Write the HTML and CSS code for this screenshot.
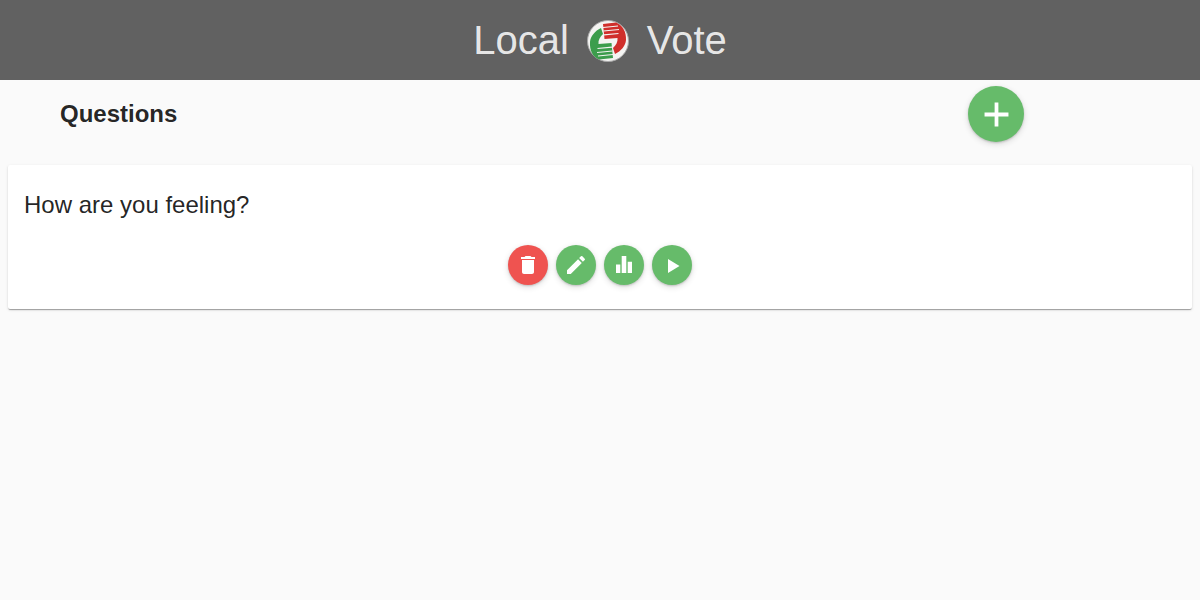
FILE: index.html
```html
<!DOCTYPE html>
<html lang="en">
<head>
<meta charset="utf-8">
<title>Local Vote</title>
<link rel="stylesheet" href="styles.css">
</head>
<body>
<header class="toolbar">
  <span class="brand">Local</span>
  <svg class="logo" viewBox="0 0 42 42" width="42" height="42" aria-hidden="true">
    <circle cx="21" cy="21" r="20.500" fill="#f4f4f2" stroke="#a8a8a8" stroke-width="1"/>
    <g id="fist-red">
      <path d="M16 4 L29 2.500 C35.500 5 39.500 12 39 20 C38.500 26 34 31 28 34 L26 28 C29 25 31 22 30.500 18 L17.500 19 Z" fill="#d02f2b"/>
      <path d="M16 7.500 L31 6 M16.500 11 L32 9.500 M17 14.800 L31.500 13.500" stroke="#f4f4f2" stroke-width="1.200" fill="none"/>
    </g>
    <g id="fist-green">
      <path d="M26 38 L12 39.500 C5.500 37 2.500 30 3 22 C3.500 16 8 11 14 8 L16 14 C13 17 11 20 11.500 24 L24.500 23 Z" fill="#3c9d4c"/>
      <path d="M26 34.500 L11 36 M25.500 31 L10 32.500 M25 27.200 L10.500 28.500" stroke="#f4f4f2" stroke-width="1.200" fill="none"/>
    </g>
  </svg>
  <span class="brand">Vote</span>
</header>
<main>
  <div class="heading-row">
    <h2 class="heading">Questions</h2>
    <button class="fab fab-large" type="button" aria-label="Add">
      <svg viewBox="0 0 24 24" width="41" height="41"><path d="M19 13.100h-5.900V19h-2.200v-5.900H5v-2.200h5.900V5h2.200v5.900H19z" fill="#fff"/></svg>
    </button>
  </div>
  <section class="card">
    <p class="question">How are you feeling?</p>
    <div class="actions">
      <button class="fab fab-small fab-red" type="button" aria-label="Delete">
        <svg viewBox="0 0 24 24" width="24" height="24"><path d="M6 19c0 1.100.9 2 2 2h8c1.100 0 2-.9 2-2V7H6v12zM19 4h-3.500l-1-1h-5l-1 1H5v2h14V4z" fill="#fff"/></svg>
      </button>
      <button class="fab fab-small" type="button" aria-label="Edit">
        <svg viewBox="0 0 24 24" width="24" height="24"><path d="M3 17.250V21h3.750L17.810 9.940l-3.750-3.750L3 17.250zM20.710 7.040a1 1 0 0 0 0-1.410l-2.340-2.340a1 1 0 0 0-1.410 0l-1.830 1.830 3.750 3.750 1.830-1.830z" fill="#fff"/></svg>
      </button>
      <button class="fab fab-small" type="button" aria-label="Results">
        <svg viewBox="0 0 24 24" width="24" height="24"><path d="M4 11.500h4.300V20H4zM9.700 3h4.600v17H9.700zM15.700 8.700H20V20h-4.300z" fill="#fff"/></svg>
      </button>
      <button class="fab fab-small" type="button" aria-label="Start">
        <svg viewBox="0 0 24 24" width="24" height="24"><path d="M8 6v14l11.500-7z" fill="#fff"/></svg>
      </button>
    </div>
  </section>
</main>
</body>
</html>
```
FILE: styles.css
```css
* { box-sizing: border-box; }
html, body { margin: 0; height: 100%; }
body {
  background: #fafafa;
  font-family: "Liberation Sans", Arial, sans-serif;
  color: rgba(0, 0, 0, 0.87);
  overflow: hidden;
}
.toolbar {
  height: 80px;
  background: #616161;
  display: flex;
  align-items: center;
  justify-content: center;
  gap: 18px;
}
.brand {
  color: rgba(255, 255, 255, 0.87);
  font-size: 40px;
  line-height: 1;
}
.logo { flex: none; margin-top: 2px; }
.heading-row {
  height: 68px;
  display: flex;
  align-items: center;
  padding: 0 176px 0 60px;
  justify-content: space-between;
}
.heading {
  margin: 0;
  font-size: 24px;
  font-weight: 700;
}
.fab {
  border: 0;
  padding: 0;
  border-radius: 50%;
  background: #66bb6a;
  display: flex;
  align-items: center;
  justify-content: center;
  box-shadow: 0 1px 2px rgba(0,0,0,.16), 0 2px 6px rgba(0,0,0,.14);
}
.fab-large { width: 56px; height: 56px; }
.fab-small { width: 40px; height: 40px; }
.fab-red { background: #ef5350; }
.card {
  margin: 17px 8px 0;
  height: 144px;
  background: #fff;
  border-radius: 2px;
  padding: 16px;
  box-shadow: 0 2px 1px -1px rgba(0,0,0,.2), 0 1px 1px 0 rgba(0,0,0,.14), 0 1px 3px 0 rgba(0,0,0,.12);
}
.question {
  margin: 0;
  font-size: 24px;
  line-height: 48px;
}
.actions {
  display: flex;
  justify-content: center;
  gap: 8px;
  margin-top: 16px;
}
```
